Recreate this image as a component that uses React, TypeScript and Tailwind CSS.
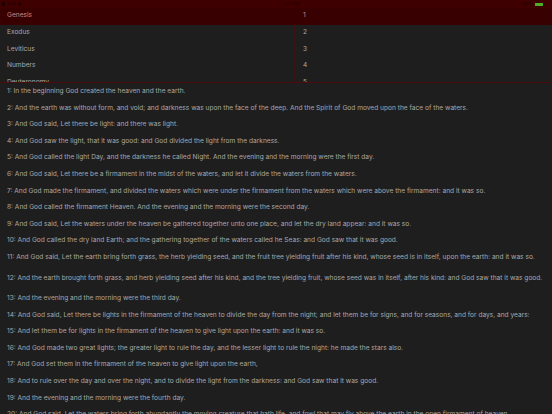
import React from "react";

const books = ["Genesis", "Exodus", "Leviticus", "Numbers", "Deuteronomy"];

const verses = [
  "In the beginning God created the heaven and the earth.",
  "And the earth was without form, and void; and darkness was upon the face of the deep. And the Spirit of God moved upon the face of the waters.",
  "And God said, Let there be light: and there was light.",
  "And God saw the light, that it was good: and God divided the light from the darkness.",
  "And God called the light Day, and the darkness he called Night. And the evening and the morning were the first day.",
  "And God said, Let there be a firmament in the midst of the waters, and let it divide the waters from the waters.",
  "And God made the firmament, and divided the waters which were under the firmament from the waters which were above the firmament: and it was so.",
  "And God called the firmament Heaven. And the evening and the morning were the second day.",
  "And God said, Let the waters under the heaven be gathered together unto one place, and let the dry land appear: and it was so.",
  "And God called the dry land Earth; and the gathering together of the waters called he Seas: and God saw that it was good.",
  "And God said, Let the earth bring forth grass, the herb yielding seed, and the fruit tree yielding fruit after his kind, whose seed is in itself, upon the earth: and it was so.",
  "And the earth brought forth grass, and herb yielding seed after his kind, and the tree yielding fruit, whose seed was in itself, after his kind: and God saw that it was good.",
  "And the evening and the morning were the third day.",
  "And God said, Let there be lights in the firmament of the heaven to divide the day from the night; and let them be for signs, and for seasons, and for days, and years:",
  "And let them be for lights in the firmament of the heaven to give light upon the earth: and it was so.",
  "And God made two great lights; the greater light to rule the day, and the lesser light to rule the night: he made the stars also.",
  "And God set them in the firmament of the heaven to give light upon the earth,",
  "And to rule over the day and over the night, and to divide the light from the darkness: and God saw that it was good.",
  "And the evening and the morning were the fourth day.",
  "And God said, Let the waters bring forth abundantly the moving creature that hath life, and fowl that may fly above the earth in the open firmament of heaven.",
];

function VerseRow({ n, text }: { n: number; text: string }) {
  const tall = n === 11 ? "h-[21px]" : n === 12 ? "h-[20px]" : "h-[16.6px]";
  return (
    <div className={`${tall} shrink-0 px-[7px] pt-[4px] leading-[8px] whitespace-nowrap`}>
      {n}: {text}
    </div>
  );
}

export default function App() {
  return (
    <div
      className="w-[552px] h-[414px] overflow-hidden bg-[#1e1e1e] text-[#a9a9a9] flex flex-col"
      style={{ fontFamily: "Inter, 'Liberation Sans', sans-serif" }}
    >
      {/* status bar */}
      <div className="h-[8px] shrink-0 bg-[#3e0000] flex items-center justify-between px-[2px] text-[4px] text-[#1a0000]">
        <div className="flex items-center gap-[2px]">
          <span className="w-[3px] h-[4px] rounded-[1px] bg-[#1a0000]" />
          <span>iPad</span>
          <span>◆</span>
        </div>
        <span className="ml-[40px]">3:17 PM</span>
        <div className="flex items-center gap-[2px] pr-[4px]">
          <span>100%</span>
          <span className="w-[8px] h-[3px] bg-[#4caf2a] rounded-[0.5px]" />
          <span className="w-[1px] h-[2px] bg-[#1a0000]" />
        </div>
      </div>

      {/* books table */}
      <div className="h-[74px] shrink-0 overflow-hidden flex flex-col text-[6.6px]">
        {books.map((b, i) => (
          <div
            key={b}
            className={`h-[16.6px] shrink-0 flex ${i === 0 ? "bg-[#380000] text-[#c88a8a]" : ""}`}
          >
            <div className="w-[294px] flex items-center px-[7px]">{b}</div>
            <div
              className={`flex-1 flex items-center pl-[8px] border-l ${
                i === 0 ? "border-transparent" : "border-[#3a1212]"
              }`}
            >
              {i + 1}
            </div>
          </div>
        ))}
      </div>
      <div className="h-[1px] shrink-0 bg-[#4a0c0c]" />

      {/* verses */}
      <div className="flex-1 flex flex-col text-[6.6px]">
        {verses.map((v, i) => (
          <VerseRow key={i} n={i + 1} text={v} />
        ))}
      </div>
    </div>
  );
}
